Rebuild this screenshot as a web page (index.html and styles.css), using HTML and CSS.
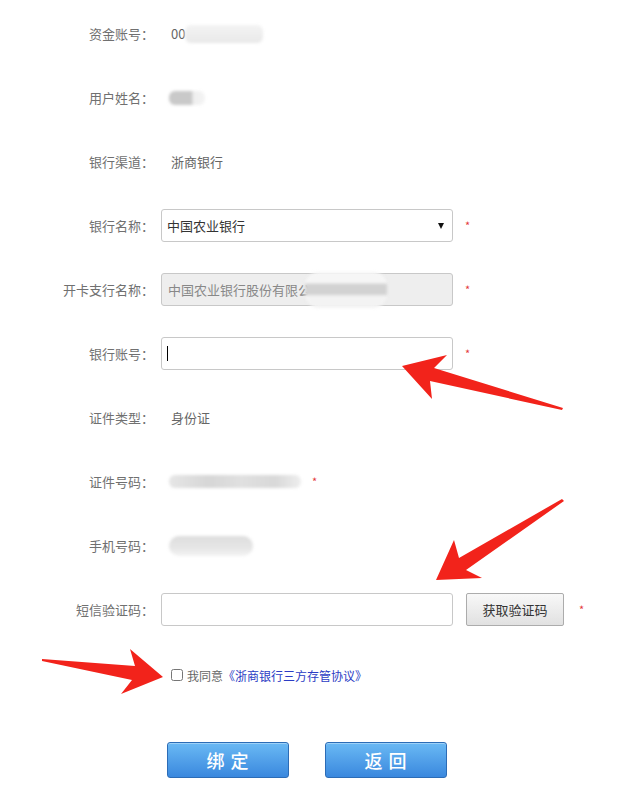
FILE: index.html
```html
<!DOCTYPE html>
<html>
<head>
    <meta charset="UTF-8">
    <title>绑定银行账户</title>
    <link rel="stylesheet" href="styles.css">
</head>
<body>
    <div class="bindPage">
        <form class="bindForm">
            <div class="row">
                <label class="label">资金账号：</label>
                <div class="value">00<span class="blur blurAccount"></span></div>
            </div>
            <div class="row">
                <label class="label">用户姓名：</label>
                <div class="value"><span class="blur blurName"></span></div>
            </div>
            <div class="row">
                <label class="label">银行渠道：</label>
                <div class="value">浙商银行</div>
            </div>
            <div class="row">
                <label class="label">银行名称：</label>
                <div class="selectWrap">
                    <select class="field">
                        <option>中国农业银行</option>
                    </select>
                </div>
                <span class="required">*</span>
            </div>
            <div class="row">
                <label class="label">开卡支行名称：</label>
                <div class="fieldWrap">
                    <input class="field" type="text" value="中国农业银行股份有限公司" disabled>
                    <span class="blur blurBranch"></span>
                </div>
                <span class="required">*</span>
            </div>
            <div class="row">
                <label class="label">银行账号：</label>
                <div class="fieldWrap">
                    <input class="field" type="text">
                    <span class="caret"></span>
                </div>
                <span class="required">*</span>
            </div>
            <div class="row">
                <label class="label">证件类型：</label>
                <div class="value">身份证</div>
            </div>
            <div class="row">
                <label class="label">证件号码：</label>
                <div class="value"><span class="blur blurId"></span><span class="required inline">*</span></div>
            </div>
            <div class="row">
                <label class="label">手机号码：</label>
                <div class="value"><span class="blur blurPhone"></span></div>
            </div>
            <div class="row">
                <label class="label">短信验证码：</label>
                <div class="smsGroup">
                    <input class="field sms" type="text">
                    <button type="button" class="codeBtn">获取验证码</button>
                    <span class="required">*</span>
                </div>
            </div>
            <div class="agreeRow">
                <input type="checkbox" id="agree">
                <label for="agree">我同意</label>
                <a href="#">《浙商银行三方存管协议》</a>
            </div>
            <div class="actions">
                <button type="button" class="btnBlue">绑 定</button>
                <button type="button" class="btnBlue">返 回</button>
            </div>
        </form>

        <!-- red arrows drawn over the screenshot -->
        <svg class="arrows" width="628" height="809" viewBox="0 0 628 809">
            <polygon points="402,366 447,355 434,368 563,408 562,410 430,381 432,399"/>
            <polygon points="436,580 454,540 459,558 562,499 564,501 466,570 482,578"/>
            <polygon points="163,677 130,649 135,666 42,659 42,661 132,680 121,694"/>
        </svg>
    </div>
</body>
</html>
```

FILE: styles.css
```css
html, body {
    padding: 0;
    margin: 0;
}

body {
    font-family: "Noto Sans CJK SC", "Liberation Sans", sans-serif;
    font-size: 13px;
    color: #666;
    background-color: #fff;
}

.bindPage {
    position: relative;
    width: 628px;
    height: 809px;
}

.bindForm {
    padding-top: 17px;
}

.row {
    display: flex;
    align-items: center;
    height: 33px;
    margin-bottom: 31px;
}

.label {
    width: 154px;
    margin-right: 7px;
    text-align: right;
    color: #707070;
    white-space: nowrap;
}

.value {
    display: flex;
    align-items: center;
    padding-left: 10px;
    color: #666;
}

.blur {
    display: inline-block;
    border-radius: 6px;
    filter: blur(1.5px);
}

.blurAccount {
    width: 78px;
    height: 18px;
    background: linear-gradient(#f3f3f3, #e9e9e9);
}

.blurName {
    width: 36px;
    height: 14px;
    margin-left: -2px;
    background: linear-gradient(90deg, #c9c9c9 0, #c9c9c9 64%, #eee 66%, #f4f4f4 100%);
}

.blurId {
    width: 132px;
    height: 13px;
    margin-left: -2px;
    background: linear-gradient(90deg, #e6e6e6, #d6d6d6 30%, #e0e0e0 55%, #d8d8d8 80%, #eee);
}

.blurPhone {
    width: 84px;
    height: 20px;
    margin-left: -2px;
    border-radius: 10px;
    background: linear-gradient(#ddd, #e6e6e6 60%, #f3f3f3);
}

.required {
    margin-left: 12px;
    color: #e4393c;
    font-size: 11px;
    position: relative;
    top: -1px;
}

.required.inline {
    margin-left: 11px;
}

.fieldWrap, .selectWrap {
    position: relative;
    width: 292px;
    height: 33px;
}

.field {
    box-sizing: border-box;
    width: 292px;
    height: 33px;
    margin: 0;
    padding: 0 6px;
    border: 1px solid #c8c8c8;
    border-radius: 3px;
    font-family: inherit;
    font-size: 13px;
    color: #333;
    background-color: #fff;
    outline: none;
}

select.field {
    -webkit-appearance: none;
    appearance: none;
    padding-left: 5px;
}

.selectWrap::after {
    content: "";
    position: absolute;
    right: 9px;
    top: 14px;
    border-left: 3px solid transparent;
    border-right: 3px solid transparent;
    border-top: 6px solid #111;
}

.field:disabled {
    background-color: #eee;
    color: #888;
}

.blurBranch {
    position: absolute;
    left: 144px;
    top: -1px;
    width: 82px;
    height: 36px;
    border-radius: 14px;
    background: linear-gradient(#f6f6f6 0, #f6f6f6 30%, #d2d2d2 34%, #d2d2d2 62%, #f3f3f3 66%);
}

.caret {
    position: absolute;
    left: 6px;
    top: 9px;
    width: 1px;
    height: 15px;
    background-color: #000;
}

.smsGroup {
    display: flex;
    align-items: center;
}

.codeBtn {
    box-sizing: border-box;
    width: 98px;
    height: 33px;
    margin-left: 13px;
    border: 1px solid #acacac;
    border-radius: 2px;
    background: linear-gradient(#f8f8f8, #e1e1e1);
    font-family: inherit;
    font-size: 13px;
    color: #333;
    padding: 0;
}

.smsGroup .required {
    margin-left: 15px;
}

.agreeRow {
    display: flex;
    align-items: center;
    height: 36px;
    padding-left: 171px;
    font-size: 12px;
}

.agreeRow input {
    width: 12px;
    height: 12px;
    margin: 0 4px 0 0;
    accent-color: #bbb;
}

.agreeRow label {
    color: #666;
}

.agreeRow a {
    color: #2b3cc4;
    text-decoration: none;
}

.actions {
    display: flex;
    gap: 36px;
    margin-top: 49px;
    padding-left: 167px;
}

.btnBlue {
    box-sizing: border-box;
    width: 122px;
    height: 36px;
    padding: 0;
    border: 1px solid #2c6cb6;
    border-radius: 3px;
    background: linear-gradient(#6ab9f4, #3a88de);
    box-shadow: inset 0 1px 0 rgba(255, 255, 255, 0.35);
    color: #fff;
    font-family: inherit;
    font-size: 18px;
    font-weight: 500;
    letter-spacing: 1px;
}

.arrows {
    position: absolute;
    left: 0;
    top: 0;
    pointer-events: none;
}

.arrows polygon {
    fill: #f2231b;
}
```
